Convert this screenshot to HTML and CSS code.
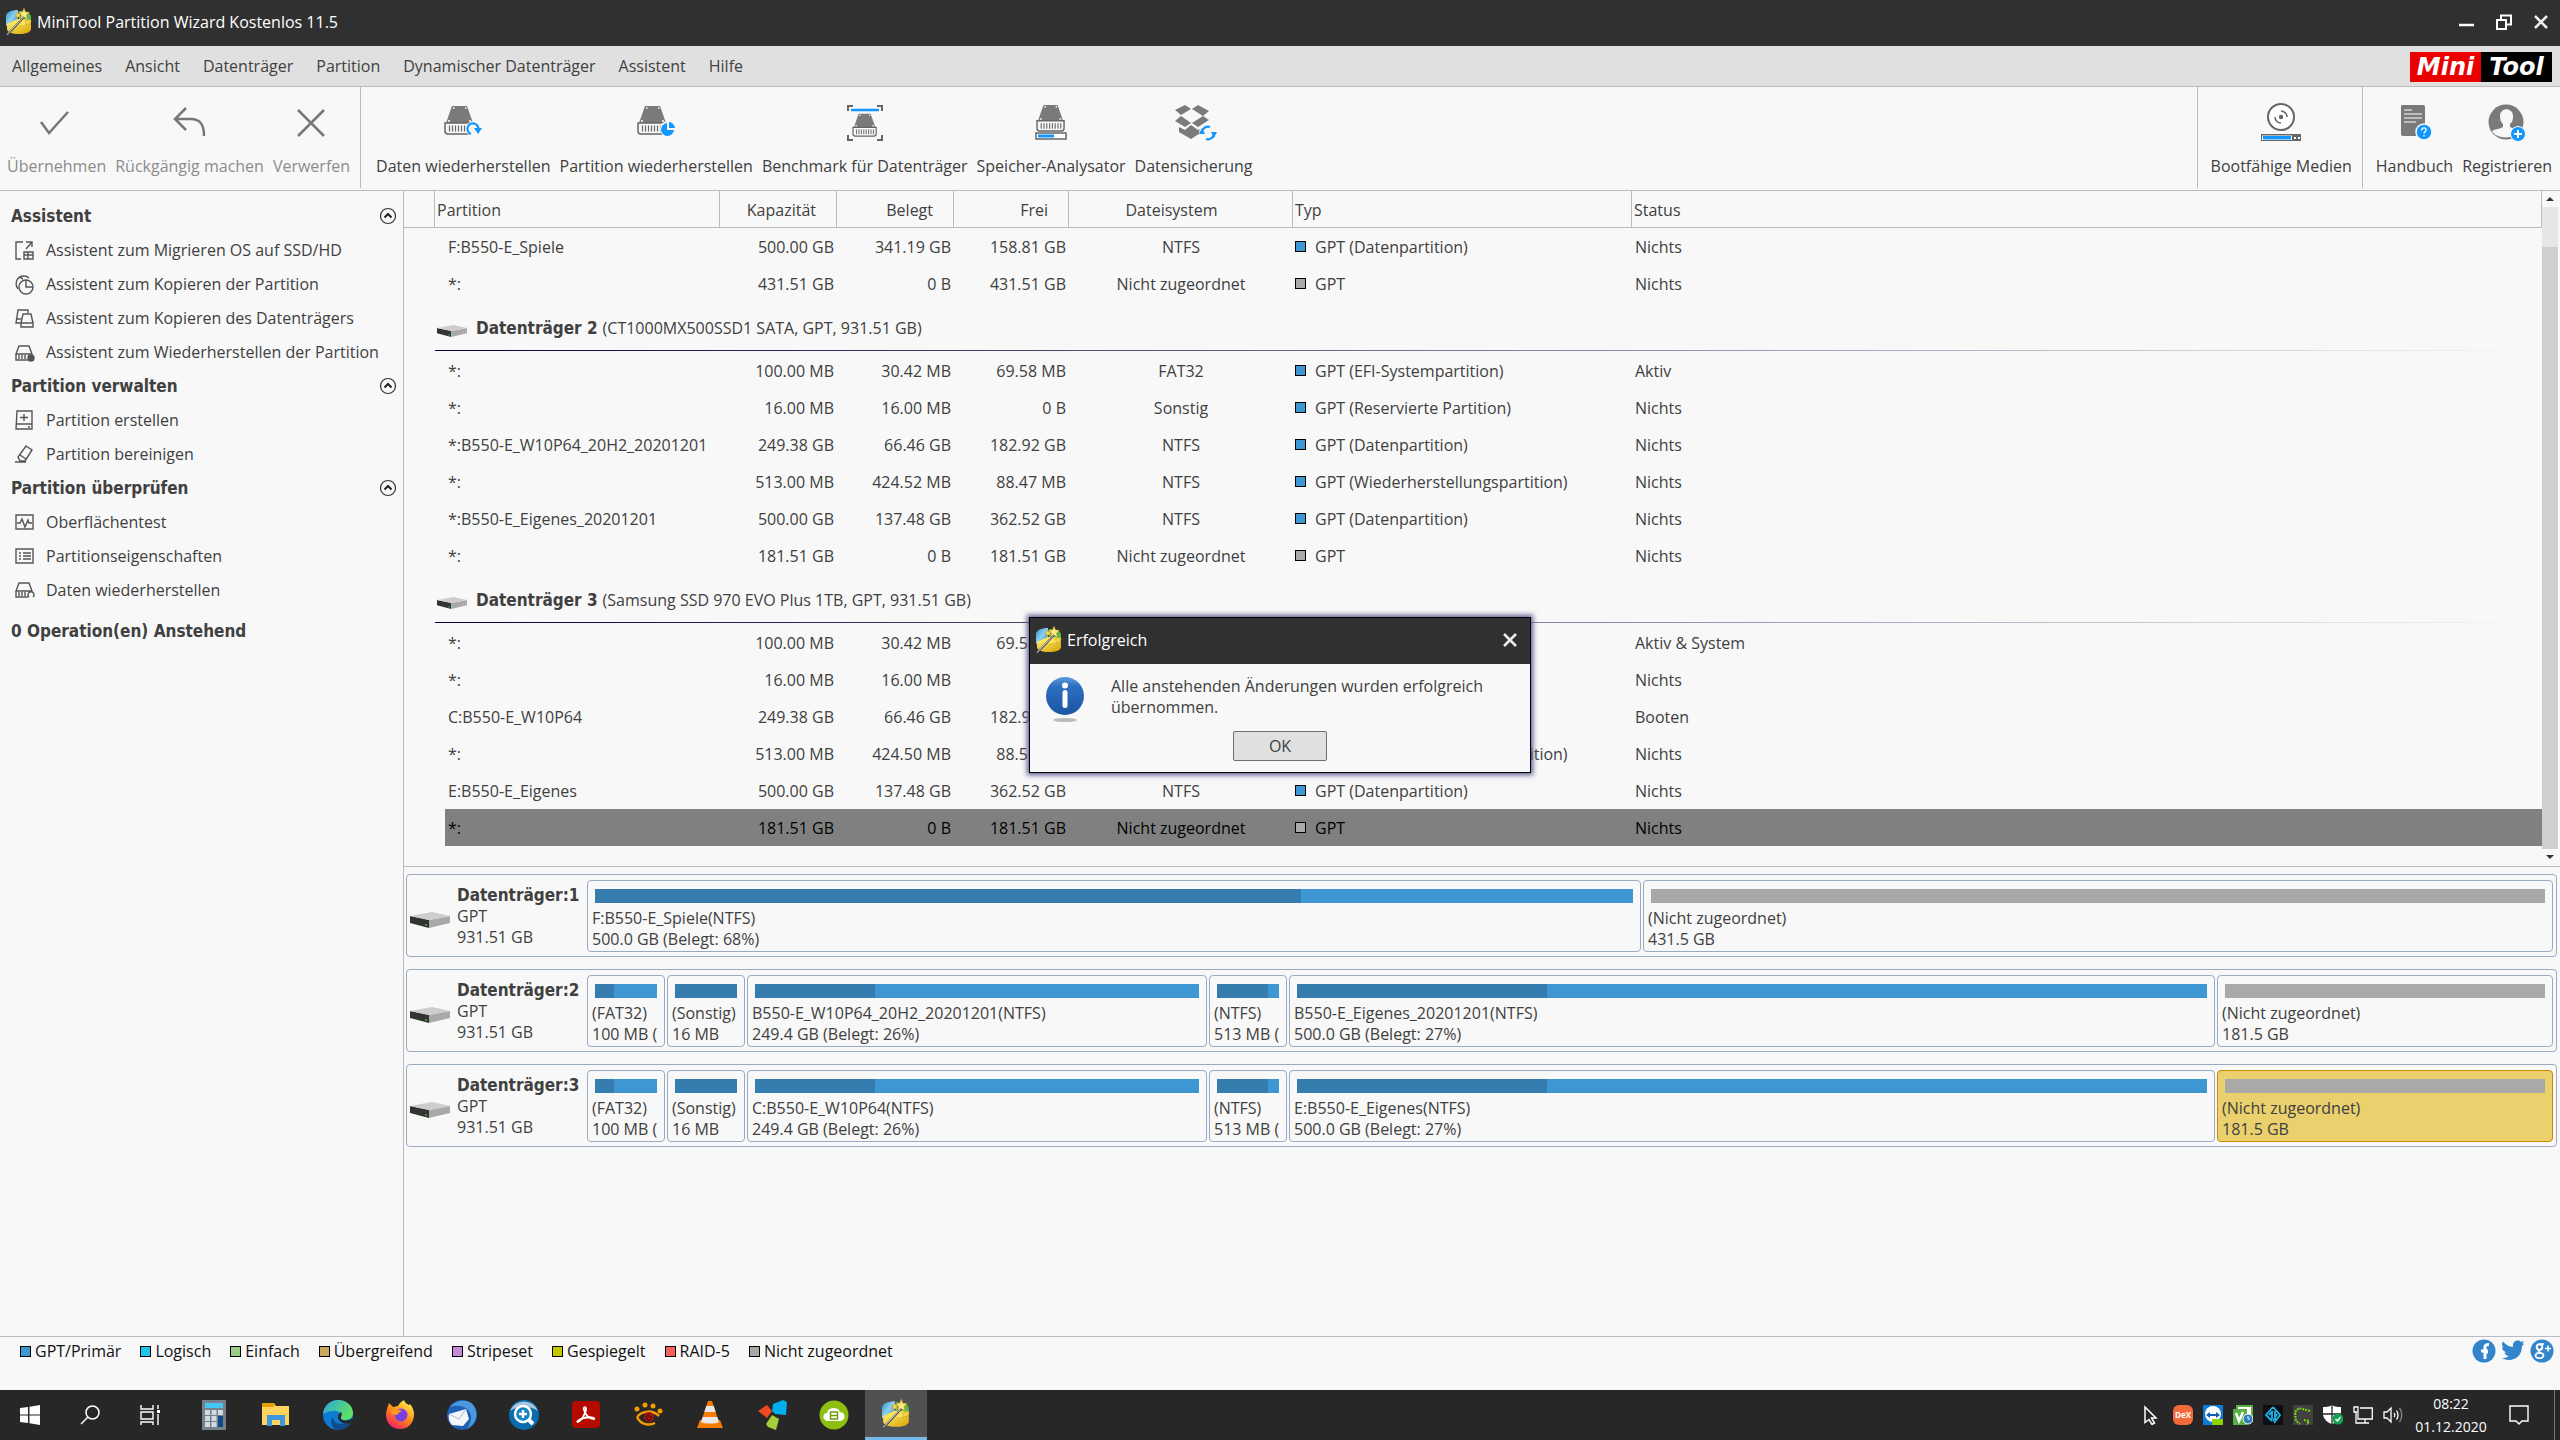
FILE: index.html
```html
<!DOCTYPE html>
<html lang="de">

  <head>
    <meta charset="UTF-8">
    <meta name="viewport" content="width=device-width, initial-scale=1.0">
    <title>MiniTool Partition Wizard Kostenlos 11.5</title>
    <link rel="stylesheet" href="styles.css">
  </head>

  <body>
    <!-- shared icons -->
    <svg class="defs" width="0" height="0" aria-hidden="true">
      <defs>
        <linearGradient id="gold" x1="0" y1="0" x2="1" y2="1">
          <stop offset="0" stop-color="#fff27a" />
          <stop offset="1" stop-color="#d9a400" />
        </linearGradient>
        <linearGradient id="sky" x1="0" y1="0" x2="1" y2="1">
          <stop offset="0" stop-color="#2a8fd0" />
          <stop offset="0.5" stop-color="#8fd0f0" />
          <stop offset="1" stop-color="#1f78b8" />
        </linearGradient>
      </defs>
      <symbol id="wizard" viewBox="0 0 28 28">
        <path d="M1 8c0-4 6-6 12-6v11L1 18z" fill="url(#sky)" />
        <path d="M14 3c7 0 12 2 12 6v5l-12-1z" fill="#58b947" />
        <path d="M2 16l11-5 13 1v9c0 3-5 5-12 5S2 24 2 21z" fill="url(#gold)" />
        <path d="M2 16l11-5 13 1c0 4-5 5-11 5S3 18 2 16z" fill="#fbe45a" />
        <path d="M19 0l1.500 4 4 .3-3 2.700 1 4.500-3.500-2.500-3.500 2.500 1-4.500-3-2.700 4-.3z" fill="#ffe680" stroke="#b98a10" stroke-width=".5" />
        <path d="M13 4l1 2 2 .3-1.500 1.400.5 2.300-2-1.200-2 1.200.5-2.300L10 6.300l2-.3zM23 11l1 2 2.500.3-1.800 1.500.6 2.400-2.300-1.300-2.200 1.300.5-2.400-1.800-1.500 2.400-.3z" fill="#f6d84b" stroke="#b98a10" stroke-width=".4" />
        <path d="M2 27L19 9" stroke="#555" stroke-width="2" />
        <path d="M2 26.500L19 8.500" stroke="#ddd" stroke-width=".9" />
      </symbol>
      <symbol id="drive" viewBox="0 0 40 16">
        <path d="M0 4l19 4v8L0 11z" fill="#333" />
        <path d="M19 8l21-4v7l-21 5z" fill="#a9a9a9" />
        <path d="M0 4l22-4 18 4-21 4z" fill="#cdcdcd" />
        <path d="M15 12h2v2h-2z" fill="#2aa52a" />
      </symbol>
      <symbol id="hdd" viewBox="0 0 32 30">
        <path d="M8 1h15l6 17H2z" fill="#7a7a7a" />
        <path d="M9 3h1.500M21 3h1.500M4 16h2M25 16h2" stroke="#fff" stroke-width="1.500" />
        <path d="M1 18h29v8a3 3 0 0 1-3 3H4a3 3 0 0 1-3-3z" fill="#f8f8f8" stroke="#666" stroke-width="1.500" />
        <path d="M5.500 20.500v6M8.500 20.500v6M11.500 20.500v6M14.500 20.500v6M17.500 20.500v6M20.500 20.500v6M23.500 20.500v6M26.500 20.500v6" stroke="#666" stroke-width="1.200" />
      </symbol>
      <symbol id="fold" viewBox="0 0 18 18">
        <circle cx="9" cy="9" r="7.500" fill="none" stroke="#333" stroke-width="1.200" />
        <path d="M5.500 10.500L9 7l3.500 3.500" fill="none" stroke="#222" stroke-width="2" />
      </symbol>
      <symbol id="close" viewBox="0 0 16 16">
        <path d="M2 2l12 12M14 2L2 14" stroke="#eee" stroke-width="2.500" />
      </symbol>
    </svg>

    <div class="app">
      <header class="titlebar">
        <svg class="logo"><use href="#wizard" /></svg>
        <h1>MiniTool Partition Wizard Kostenlos 11.5</h1>
        <button type="button" aria-label="Minimieren"><svg width="16" height="16"><path d="M0 11h15" stroke="#fff" stroke-width="2.500" /></svg></button>
        <button type="button" aria-label="Wiederherstellen"><svg width="16" height="16" fill="none" stroke="#fff" stroke-width="2"><path d="M1 6h9v9H1zM5 5V1.500h10v9h-4" /></svg></button>
        <button type="button" aria-label="Schließen"><svg width="16" height="16"><use href="#close" /></svg></button>
      </header>

      <nav class="menubar">
        <a href="#">Allgemeines</a>
        <a href="#">Ansicht</a>
        <a href="#">Datenträger</a>
        <a href="#">Partition</a>
        <a href="#">Dynamischer Datenträger</a>
        <a href="#">Assistent</a>
        <a href="#">Hilfe</a>
        <div class="brand"><span>Mini</span><span>Tool</span></div>
      </nav>

      <div class="toolbar">
        <div class="tools">
          <button type="button" disabled>
            <svg width="40" height="42" fill="none" stroke="#777" stroke-width="2.500"><path d="M4 21l8 11L31 11" /></svg>
            Übernehmen
          </button>
          <button type="button" disabled>
            <svg width="40" height="42" fill="none" stroke="#777" stroke-width="2.500"><path d="M16 7L5 18l11 11M5 18h16c9 0 13 5 13 17" /></svg>
            Rückgängig machen
          </button>
          <button type="button" disabled>
            <svg width="40" height="42" fill="none" stroke="#777" stroke-width="2.500"><path d="M7 9l26 26M33 9L7 35" /></svg>
            Verwerfen
          </button>
        </div>
        <div class="tools grow">
          <button type="button">
            <svg width="40" height="42"><use href="#hdd" x="1" y="4" width="32" height="30" /><circle cx="31" cy="28" r="8" fill="#f8f8f8" /><path d="M28 33a5.500 5.500 0 1 1 7-3" fill="none" stroke="#1296ff" stroke-width="2.200" /><path d="M31 27h8l-4 6z" fill="#1296ff" /></svg>
            Daten wiederherstellen
          </button>
          <button type="button">
            <svg width="40" height="42"><use href="#hdd" x="1" y="4" width="32" height="30" /><circle cx="32" cy="28" r="8" fill="#f8f8f8" /><path d="M31 22a6.500 6.500 0 1 0 7 7h-7z" fill="#1296ff" /><path d="M33 21a6.500 6.500 0 0 1 6 6h-6z" fill="#1296ff" /></svg>
            Partition wiederherstellen
          </button>
          <button type="button">
            <svg width="40" height="42"><path d="M3 10V5h5M32 5h5v5M3 34v5h5M37 34v5h-5" fill="none" stroke="#666" stroke-width="2" /><path d="M6 9h28" stroke="#1296ff" stroke-width="2.500" /><use href="#hdd" x="6" y="12" width="28" height="24" /></svg>
            Benchmark für Datenträger
          </button>
          <button type="button">
            <svg width="40" height="42"><use href="#hdd" x="4" y="3" width="32" height="28" /><path d="M5 32h30v6H5z" fill="#fff" stroke="#666" stroke-width="1.500" /><path d="M7 35h16" stroke="#1296ff" stroke-width="3" /></svg>
            Speicher-Analysator
          </button>
          <button type="button">
            <svg width="46" height="42"><path d="M14 4l6 4-10 6-6-5zM27 4l11 6-6 5-11-7zM4 20l6-5 10 7-6 4zM32 15l6 4-11 7-6-4zM8 26l6 3 6-5 7 5 4-2v4l-11 7-12-7z" fill="#7a7a7a" /><circle cx="37" cy="32" r="9" fill="#f8f8f8" /><path d="M31 32a6 6 0 0 1 8-6M43 32a6 6 0 0 1-8 6" fill="none" stroke="#1296ff" stroke-width="2.200" /><path d="M28 33h6l-3-6zM40 31h6l-3 6z" fill="#1296ff" /></svg>
            Datensicherung
          </button>
        </div>
        <div class="tools right">
          <button type="button">
            <svg width="44" height="42"><circle cx="22" cy="16" r="13" fill="#fff" stroke="#666" stroke-width="2" /><path d="M22 10a6 6 0 0 1 6 6M22 22a6 6 0 0 1-6-6" fill="none" stroke="#666" stroke-width="1.500" /><circle cx="22" cy="16" r="2.200" fill="#666" /><path d="M2 33h40v7H2z" fill="#666" /><path d="M3 34.500h30v4.500H3z" fill="#fff" /><path d="M4 35h28v3.500H4z" fill="#1296ff" /><path d="M35 36h2v2h-2zM39 36h2v2h-2z" fill="#fff" /></svg>
            Bootfähige Medien
          </button>
        </div>
        <div class="tools right">
          <button type="button">
            <svg width="40" height="42"><path d="M7 4h21a2 2 0 0 1 2 2v29H8a2 2 0 0 1-2-2V5z" fill="#7a7a7a" /><path d="M9 9h8M9 13h18M9 17h18M9 21h12" stroke="#fff" stroke-width="1.200" /><circle cx="29" cy="31" r="8" fill="#1296ff" stroke="#f8f8f8" stroke-width="1.500" /><path d="M26.500 29.500c0-4 5.500-3 4.500 0-.3 1-2 1.200-2 3M29 34v1.500" fill="none" stroke="#fff" stroke-width="1.300" /></svg>
            Handbuch
          </button>
          <button type="button">
            <svg width="40" height="42"><circle cx="19" cy="21" r="17.500" fill="#7a7a7a" /><path d="M13 15c0-9 13-9 13 0 0 5-1 6-3 8v3c4 2 7 2 10 4-5 8-23 9-28 0 3-2 8-2 11-4v-3c-2-2-3-4-3-8z" fill="#f8f8f8" /><circle cx="31" cy="33" r="7.500" fill="#1296ff" stroke="#f8f8f8" /><path d="M31 29v8M27 33h8" stroke="#fff" stroke-width="2" /></svg>
            Registrieren
          </button>
        </div>
      </div>

      <div class="content">
        <aside class="sidebar">
          <h2>Assistent <svg><use href="#fold" /></svg></h2>
          <a href="#"><svg viewBox="0 0 21 21"><path d="M9 2H2v17h5M12 2h6v5M18 2l-6 7M10 12h9v7h-9zM10 15h9M14 12v7" /></svg>Assistent zum Migrieren OS auf SSD/HD</a>
          <a href="#"><svg viewBox="0 0 21 21"><circle cx="12" cy="13" r="7" /><path d="M12 6v7h7M4 15C0 9 3 2 10 2c3 0 4 1 5 2M9 5c-3-1-3-3-3-3" /></svg>Assistent zum Kopieren der Partition</a>
          <a href="#"><svg viewBox="0 0 21 21"><path d="M14 5V2H4L2 15h5M3 11h4M9 6h8l2 9v4H7v-4zM7 15h12" /></svg>Assistent zum Kopieren des Datenträgers</a>
          <a href="#"><svg viewBox="0 0 21 21"><path d="M5 4h10l3 8H2zM2 12v6h14M5 13v4M8 13v4M11 13v4" /><circle cx="17" cy="16" r="3" fill="#555" /></svg>Assistent zum Wiederherstellen der Partition</a>
          <h2>Partition verwalten <svg><use href="#fold" /></svg></h2>
          <a href="#"><svg viewBox="0 0 21 21"><path d="M3 1h15v18H2zM2 14h16M10 4v7M6 7.500h8M14 17h2" /></svg>Partition erstellen</a>
          <a href="#"><svg viewBox="0 0 21 21"><path d="M12 2l6 4-7 11H6l-2-4zM6 11l6 4M1 18h11" /></svg>Partition bereinigen</a>
          <h2>Partition überprüfen <svg><use href="#fold" /></svg></h2>
          <a href="#"><svg viewBox="0 0 21 21"><path d="M2 3h17v14H2zM3 11h3l2-4 3 8 3-7 1 3h3" /></svg>Oberflächentest</a>
          <a href="#"><svg viewBox="0 0 21 21"><path d="M2 3h17v14H2zM5 7h2M9 7h8M5 10h2M9 10h8M5 13h2M9 13h8" /></svg>Partitionseigenschaften</a>
          <a href="#"><svg viewBox="0 0 21 21"><path d="M5 3h10l3 8H2zM2 11v6h12M5 12v4M8 12v4M11 12v4M15 17a3 3 0 1 1 4 0" /></svg>Daten wiederherstellen</a>
          <h2 class="pending">0 Operation(en) Anstehend</h2>
        </aside>

        <main>
          <div class="list">
            <table>
              <colgroup>
                <col class="c-mark"><col class="c-name"><col class="c-size"><col class="c-size"><col class="c-free"><col class="c-fs"><col class="c-type"><col>
              </colgroup>
              <thead>
                <tr><th></th><th>Partition</th><th class="num">Kapazität</th><th class="num">Belegt</th><th class="num">Frei</th><th class="fs">Dateisystem</th><th>Typ</th><th>Status</th></tr>
              </thead>
              <tbody>
                <tr><td></td><td>F:B550-E_Spiele</td><td>500.00 GB</td><td>341.19 GB</td><td>158.81 GB</td><td>NTFS</td><td><i class="sw primary"></i>GPT (Datenpartition)</td><td>Nichts</td></tr>
                <tr><td></td><td>*:</td><td>431.51 GB</td><td>0 B</td><td>431.51 GB</td><td>Nicht zugeordnet</td><td><i class="sw free"></i>GPT</td><td>Nichts</td></tr>
                <tr class="disk"><td></td><td colspan="7"><div><svg><use href="#drive" /></svg><b>Datenträger 2</b> (CT1000MX500SSD1 SATA, GPT, 931.51 GB)</div></td></tr>
                <tr><td></td><td>*:</td><td>100.00 MB</td><td>30.42 MB</td><td>69.58 MB</td><td>FAT32</td><td><i class="sw primary"></i>GPT (EFI-Systempartition)</td><td>Aktiv</td></tr>
                <tr><td></td><td>*:</td><td>16.00 MB</td><td>16.00 MB</td><td>0 B</td><td>Sonstig</td><td><i class="sw primary"></i>GPT (Reservierte Partition)</td><td>Nichts</td></tr>
                <tr><td></td><td>*:B550-E_W10P64_20H2_20201201</td><td>249.38 GB</td><td>66.46 GB</td><td>182.92 GB</td><td>NTFS</td><td><i class="sw primary"></i>GPT (Datenpartition)</td><td>Nichts</td></tr>
                <tr><td></td><td>*:</td><td>513.00 MB</td><td>424.52 MB</td><td>88.47 MB</td><td>NTFS</td><td><i class="sw primary"></i>GPT (Wiederherstellungspartition)</td><td>Nichts</td></tr>
                <tr><td></td><td>*:B550-E_Eigenes_20201201</td><td>500.00 GB</td><td>137.48 GB</td><td>362.52 GB</td><td>NTFS</td><td><i class="sw primary"></i>GPT (Datenpartition)</td><td>Nichts</td></tr>
                <tr><td></td><td>*:</td><td>181.51 GB</td><td>0 B</td><td>181.51 GB</td><td>Nicht zugeordnet</td><td><i class="sw free"></i>GPT</td><td>Nichts</td></tr>
                <tr class="disk"><td></td><td colspan="7"><div><svg><use href="#drive" /></svg><b>Datenträger 3</b> (Samsung SSD 970 EVO Plus 1TB, GPT, 931.51 GB)</div></td></tr>
                <tr><td></td><td>*:</td><td>100.00 MB</td><td>30.42 MB</td><td>69.58 MB</td><td>FAT32</td><td><i class="sw primary"></i>GPT (EFI-Systempartition)</td><td>Aktiv &amp; System</td></tr>
                <tr><td></td><td>*:</td><td>16.00 MB</td><td>16.00 MB</td><td>0 B</td><td>Sonstig</td><td><i class="sw primary"></i>GPT (Reservierte Partition)</td><td>Nichts</td></tr>
                <tr><td></td><td>C:B550-E_W10P64</td><td>249.38 GB</td><td>66.46 GB</td><td>182.92 GB</td><td>NTFS</td><td><i class="sw primary"></i>GPT (Datenpartition)</td><td>Booten</td></tr>
                <tr><td></td><td>*:</td><td>513.00 MB</td><td>424.50 MB</td><td>88.50 MB</td><td>NTFS</td><td><i class="sw primary"></i>GPT (Wiederherstellungspartition)</td><td>Nichts</td></tr>
                <tr><td></td><td>E:B550-E_Eigenes</td><td>500.00 GB</td><td>137.48 GB</td><td>362.52 GB</td><td>NTFS</td><td><i class="sw primary"></i>GPT (Datenpartition)</td><td>Nichts</td></tr>
                <tr class="selected"><td></td><td>*:</td><td>181.51 GB</td><td>0 B</td><td>181.51 GB</td><td>Nicht zugeordnet</td><td><i class="sw free"></i>GPT</td><td>Nichts</td></tr>
              </tbody>
            </table>
            <div class="scrollbar">
              <svg width="8" height="6"><path d="M0 5l4-4 4 4z" fill="#333" /></svg>
              <div class="track"><div class="thumb"></div></div>
              <svg width="8" height="6"><path d="M0 1l4 4 4-4z" fill="#333" /></svg>
            </div>
          </div>

          <div class="maps">
            <section class="map">
              <svg><use href="#drive" /></svg>
              <div class="info"><b>Datenträger:1</b><br>GPT<br>931.51 GB</div>
              <div class="parts two">
                <div class="part"><div class="bar"><div style="width: 68%"></div></div><p>F:B550-E_Spiele(NTFS)</p><p>500.0 GB (Belegt: 68%)</p></div>
                <div class="part"><div class="bar none"></div><p>(Nicht zugeordnet)</p><p>431.5 GB</p></div>
              </div>
            </section>
            <section class="map">
              <svg><use href="#drive" /></svg>
              <div class="info"><b>Datenträger:2</b><br>GPT<br>931.51 GB</div>
              <div class="parts">
                <div class="part"><div class="bar"><div style="width: 31%"></div></div><p>(FAT32)</p><p>100 MB (</p></div>
                <div class="part"><div class="bar"><div style="width: 100%"></div></div><p>(Sonstig)</p><p>16 MB</p></div>
                <div class="part"><div class="bar"><div style="width: 27%"></div></div><p>B550-E_W10P64_20H2_20201201(NTFS)</p><p>249.4 GB (Belegt: 26%)</p></div>
                <div class="part"><div class="bar"><div style="width: 82%"></div></div><p>(NTFS)</p><p>513 MB (</p></div>
                <div class="part"><div class="bar"><div style="width: 27.5%"></div></div><p>B550-E_Eigenes_20201201(NTFS)</p><p>500.0 GB (Belegt: 27%)</p></div>
                <div class="part"><div class="bar none"></div><p>(Nicht zugeordnet)</p><p>181.5 GB</p></div>
              </div>
            </section>
            <section class="map">
              <svg><use href="#drive" /></svg>
              <div class="info"><b>Datenträger:3</b><br>GPT<br>931.51 GB</div>
              <div class="parts">
                <div class="part"><div class="bar"><div style="width: 31%"></div></div><p>(FAT32)</p><p>100 MB (</p></div>
                <div class="part"><div class="bar"><div style="width: 100%"></div></div><p>(Sonstig)</p><p>16 MB</p></div>
                <div class="part"><div class="bar"><div style="width: 27%"></div></div><p>C:B550-E_W10P64(NTFS)</p><p>249.4 GB (Belegt: 26%)</p></div>
                <div class="part"><div class="bar"><div style="width: 82%"></div></div><p>(NTFS)</p><p>513 MB (</p></div>
                <div class="part"><div class="bar"><div style="width: 27.5%"></div></div><p>E:B550-E_Eigenes(NTFS)</p><p>500.0 GB (Belegt: 27%)</p></div>
                <div class="part active"><div class="bar none"></div><p>(Nicht zugeordnet)</p><p>181.5 GB</p></div>
              </div>
            </section>
          </div>
        </main>
      </div>

      <footer class="legend">
        <span><i class="sw primary"></i>GPT/Primär</span>
        <span><i class="sw logical"></i>Logisch</span>
        <span><i class="sw simple"></i>Einfach</span>
        <span><i class="sw spanned"></i>Übergreifend</span>
        <span><i class="sw striped"></i>Stripeset</span>
        <span><i class="sw mirrored"></i>Gespiegelt</span>
        <span><i class="sw raid"></i>RAID-5</span>
        <span><i class="sw free"></i>Nicht zugeordnet</span>
        <div class="social">
          <a href="#" aria-label="Facebook"><svg width="24" height="24"><circle cx="12" cy="12" r="11.500" fill="#3285cb" /><path d="M13 20v-7h3M9 12h7M13 13V8c0-2 1-2.500 4-2.500" fill="none" stroke="#fff" stroke-width="3" /></svg></a>
          <a href="#" aria-label="Twitter"><svg width="24" height="24"><path d="M1 19c3 0 5-.5 7-2-3 0-4-2-4.500-3.500h2C2 12 1 10 1 8l2 1C0 6 1 4 2 2.500 5 6 8 7.500 12 8c-1-6 5-8 8-5l3-1-1.500 3 2-.5L21 7c0 9-6 14-13 14-3 0-5-1-7-2z" fill="#3285cb" /></svg></a>
          <a href="#" aria-label="Google Plus"><svg width="24" height="24"><circle cx="12" cy="12" r="11.500" fill="#3285cb" /><g fill="none" stroke="#fff"><circle cx="9.500" cy="8" r="2.800" stroke-width="2" /><ellipse cx="9.500" cy="16.500" rx="4" ry="2.700" stroke-width="1.800" /><path d="M9 11c-2 1 1 2 2 3M10 5h4M18 6.500v6M15 9.500h6" stroke-width="1.500" /></g></svg></a>
        </div>
      </footer>

      <div class="overlay">
        <dialog open aria-labelledby="dialog-title">
          <div class="dialog-head">
            <svg class="logo"><use href="#wizard" /></svg>
            <h2 id="dialog-title">Erfolgreich</h2>
            <button type="button" aria-label="Schließen"><svg width="16" height="16"><use href="#close" /></svg></button>
          </div>
          <div class="dialog-body">
            <svg width="40" height="50">
              <defs><linearGradient id="ball" x1="0" y1="0" x2="0" y2="1"><stop offset="0" stop-color="#5b9bdc" /><stop offset=".25" stop-color="#2c6fc0" /><stop offset="1" stop-color="#1c55a0" /></linearGradient></defs>
              <ellipse cx="20" cy="44" rx="12" ry="2" fill="#bbb" />
              <circle cx="20" cy="20" r="19" fill="url(#ball)" />
              <circle cx="20" cy="9.500" r="3" fill="#fff" />
              <rect x="17.500" y="14" width="5" height="18" rx="2.500" fill="#fff" />
            </svg>
            <p>Alle anstehenden Änderungen wurden erfolgreich übernommen.</p>
          </div>
          <button type="button" class="ok">OK</button>
        </dialog>
      </div>
    </div>

    <div class="taskbar">
      <div class="system">
        <button type="button" aria-label="Start"><svg width="20" height="20" fill="#fff"><path d="M0 3l8-1v7.500H0zM9.500 1.800L20 0v9.500H9.500zM0 10.500h8V18l-8-1zM9.500 10.500H20V20l-10.500-1.800z" /></svg></button>
        <button type="button" aria-label="Suche"><svg width="20" height="20" fill="none" stroke="#fff" stroke-width="1.500"><circle cx="12.500" cy="7.500" r="6.500" /><path d="M8 12l-7 7" /></svg></button>
        <button type="button" aria-label="Taskansicht"><svg width="20" height="20" fill="none" stroke="#fff" stroke-width="1.400"><path d="M1 0v4h12V0M1 7h12v7H1zM1 20v-3h12v3M18 0v4M18 9v11" /><path d="M17 5h3v3h-3z" fill="#fff" stroke="none" /></svg></button>
      </div>
      <button type="button" aria-label="Rechner"><svg width="30" height="30"><path d="M3 0h24v30H3z" fill="#76818d" /><path d="M6 3h18v5H6z" fill="#45c7f4" /><path d="M6 10h5v5H6zM12.500 10h5v5h-5zM19 10h5v5h-5zM6 16h5v5H6zM12.500 16h5v5h-5zM6 22h5v5H6zM12.500 22h5v5h-5z" fill="#d3dbe2" /><path d="M19 16h5v11h-5z" fill="#0f4a8a" /></svg></button>
      <button type="button" aria-label="Explorer"><svg width="30" height="30"><path d="M1 3h12l2 3h13v19H1z" fill="#ffd45e" /><path d="M1 3h11l2 2-2 2H1z" fill="#e3a100" /><path d="M6 26V15h18v11h-5v-6h-8v6z" fill="#3d97dc" /></svg></button>
      <button type="button" aria-label="Edge">
        <svg width="30" height="30">
          <defs><linearGradient id="edge" x1="0" y1="0" x2="1" y2=".4"><stop offset="0" stop-color="#2aa6e0" /><stop offset="1" stop-color="#5fe06a" /></linearGradient></defs>
          <circle cx="15" cy="15" r="15" fill="#0b7bd4" />
          <path d="M0 14C1 5 8 0 15 0c9 0 15 6 15 13 0 5-4 7-8 7-3 0-5-1-4-3 1-6-7-9-18-3z" fill="url(#edge)" />
          <path d="M10 17c0 6 6 9 18 5-3 5-8 8-13 8-6-1-9-8-5-13z" fill="#114a8b" />
          <path d="M18 12c2 3-1 5 0 7 2 2 6 3 12-1l-2 5c-8 2-13-2-13-6 0-2 1-4 3-5z" fill="#272727" />
        </svg>
      </button>
      <button type="button" aria-label="Firefox">
        <svg width="30" height="30">
          <defs><linearGradient id="fox" x1=".8" y1="0" x2=".2" y2="1"><stop offset="0" stop-color="#fff44f" /><stop offset=".5" stop-color="#ff8a16" /><stop offset="1" stop-color="#f5156c" /></linearGradient></defs>
          <path d="M3 6l1-3 4 4 5-1c2-4 5-5 6-6 1 3 3 4 5 5l1-1c3 4 4 7 4 10 0 9-6 15-14 15S1 23 1 15c0-4 1-6 2-9z" fill="url(#fox)" />
          <circle cx="16" cy="15" r="6.500" fill="#7a3fe0" />
          <path d="M5 12c4-3 8-3 12-1-2 1-4 2-5 4-3 0-5-1-7-3z" fill="#ff9a20" />
        </svg>
      </button>
      <button type="button" aria-label="Thunderbird"><svg width="30" height="30"><circle cx="15" cy="15" r="15" fill="#1f5fb4" /><path d="M3 7C8 0 22-2 27 6c5 8 2 18-7 23 5-8 6-15 0-20C15 5 8 5 3 7z" fill="#4b97e0" /><path d="M2 14l17-5 3 10-6 7-11-1c-3-3-4-7-3-11z" fill="#f2f5fa" /><path d="M2 14l10 5 7-10" fill="none" stroke="#a9bdd6" /></svg></button>
      <button type="button" aria-label="Suchprogramm"><svg width="30" height="30"><circle cx="15" cy="15" r="15" fill="#0a6cae" /><path d="M1 11a15 15 0 0 1 28 0C20 5 10 5 1 11z" fill="#a8c4de" /><circle cx="14" cy="14" r="8" fill="#1184c4" stroke="#fff" stroke-width="2.500" /><path d="M20 20l4 4" stroke="#fff" stroke-width="4" /><path d="M14 10v8M10 14h8" stroke="#fff" stroke-width="2.500" /></svg></button>
      <button type="button" aria-label="Acrobat"><svg width="30" height="30"><rect x="1" y="1" width="28" height="27" rx="4" fill="#b30b00" /><path d="M7 22c3-1 8-9 8-13 0-3-3-2-2 1 2 6 6 9 10 9 2-2-9-3-15 1-2 1-2 2-1 2z" fill="none" stroke="#fff" stroke-width="1.800" /></svg></button>
      <button type="button" aria-label="XnView"><svg width="30" height="30"><path d="M4 17c6-7 16-7 22-1-3-3-6-4-9-4M4 17c4 8 12 9 18 6" fill="none" stroke="#f59b00" stroke-width="2.500" /><circle cx="16" cy="17" r="5" fill="#a31515" /><path d="M16 17c1-3 4 1 1 3s-5-4-1-6" fill="none" stroke="#300" /><circle cx="4" cy="9" r="2.500" fill="#f59b00" /><circle cx="12" cy="5" r="2.500" fill="#f59b00" /><circle cx="20" cy="6" r="2.500" fill="#f59b00" /><circle cx="27" cy="11" r="2.500" fill="#f59b00" /></svg></button>
      <button type="button" aria-label="VLC"><svg width="30" height="30"><path d="M5 20h20l3 8H2z" fill="#f57c00" /><path d="M13 1h4l7 21c-3 3-15 3-18 0z" fill="#f57c00" /><path d="M11.300 6h7.400l2 6H9.300zM7.700 17h14.600l1.700 5c-3 2-15 2-18 0z" fill="#e8e8e8" /></svg></button>
      <button type="button" aria-label="Propeller"><svg width="30" height="30"><path d="M1 11l9-6 5 6-5 7z" fill="#ef4a23" /><path d="M16 4l10-4 4 2-1 13-11-1-3-3z" fill="#00aef0" /><path d="M15 15l7 4-3 11-8-3-2-3z" fill="#a5cf3a" /></svg></button>
      <button type="button" aria-label="Cloud"><svg width="30" height="30"><circle cx="15" cy="15" r="14.500" fill="#8cbf12" /><path d="M9 21c-6 0-6-8-1-8 1-6 11-7 13-1 6 0 6 9 0 9z" fill="#fff" /><path d="M11.500 12h7v7h-7zM11.500 15.500h7" fill="none" stroke="#6f9e0a" stroke-width="1.500" /></svg></button>
      <button type="button" class="running" aria-label="MiniTool Partition Wizard"><svg width="30" height="30"><use href="#wizard" /></svg></button>

      <div class="tray">
        <svg class="pointer" width="20" height="20"><path d="M5 2l11 11h-4.500l3 5-2.500 1.500-3-5-4 3z" fill="#272727" stroke="#fff" stroke-width="1.500" /></svg>
        <svg width="20" height="20"><rect width="20" height="20" rx="6" fill="#f2693c" /><text x="10" y="13" text-anchor="middle" class="dex">DeX</text></svg>
        <svg width="20" height="20"><path d="M0 0h20v20H0z" fill="#0e7ad8" /><circle cx="10" cy="9" r="8" fill="#fff" /><path d="M3 10l4-3v2h6V7l4 3-4 3v-2H7v2z" fill="#0e5fb0" /><rect x="9" y="14" width="11" height="6" rx="1" fill="#8fd400" /></svg>
        <svg width="20" height="20"><path d="M4 1h15v14H4z" fill="#fff" stroke="#58b043" stroke-width="2" /><path d="M0 4h14v16H0z" fill="#58b043" /><path d="M3 8l3 8 4-9" fill="none" stroke="#fff" stroke-width="2.500" /><circle cx="15" cy="14" r="5" fill="#2f7db8" stroke="#fff" /><path d="M15 11v3h2" fill="none" stroke="#fff" /></svg>
        <svg width="20" height="20"><path d="M0 0h20v20H0z" fill="#0b0f14" /><path d="M10 2L3 10l6 6M9 6v8M10 2l7 8-6 8M12 6v9M6 10l4-4M14 9l-4 7" fill="none" stroke="#20b4e8" stroke-width="1.800" /></svg>
        <svg width="20" height="20"><path d="M0 0h20v20H0z" fill="#414141" /><path d="M17 6L6 3 2 7l1 9 4 3M11 15l5 1-2 4" fill="none" stroke="#76d813" stroke-width="2" stroke-dasharray="2 1" /></svg>
        <svg width="20" height="20"><path d="M9 0c3 2 6 2 9 2v7c0 5-5 9-9 10-4-1-9-5-9-10V2c3 0 6 0 9-2z" fill="#fff" /><path d="M9 0v19M0 9h18" stroke="#272727" stroke-width="1.300" /><circle cx="15" cy="14" r="5.500" fill="#12a150" /><path d="M12.500 14l2 2 3-4" fill="none" stroke="#fff" stroke-width="1.400" /></svg>
        <svg width="20" height="20" fill="none" stroke="#fff" stroke-width="1.300"><path d="M7 3h12.300v11H5V8M12 14v4M8 18h8M1 2h4v5H1zM3 7v11h5" /></svg>
        <svg width="20" height="20" fill="none" stroke="#fff" stroke-width="1.300"><path d="M1 7h3l4-4v14l-4-4H1zM11 8c1 1 1 3 0 4M13.500 5.500c2 3 2 6 0 9" /><path d="M16.500 3c3 4 3 10 0 14" stroke="#888" /></svg>
        <time datetime="2020-12-01T08:22">08:22<br>01.12.2020</time>
        <svg class="notes" width="20" height="20" fill="none" stroke="#fff" stroke-width="1.400"><path d="M1 1h18v15h-6l-3 3-3-3H1z" /></svg>
      </div>
    </div>
  </body>

</html>
```
FILE: styles.css
```css
* {
  box-sizing: border-box;
}

body {
  margin: 0;
  min-height: 100vh;
  display: flex;
  flex-direction: column;
  background: #f8f8f8;
  color: #404040;
  font-family: "Open Sans", "Noto Sans", sans-serif;
  font-size: 16px;
  line-height: 21px;
}

h1, h2, p {
  margin: 0;
  font-size: 16px;
  font-weight: 400;
}

b, .sidebar h2 {
  font-family: "DejaVu Sans Condensed", sans-serif;
  font-size: 17px;
  font-weight: 700;
}

button {
  margin: 0;
  padding: 0;
  border: 0;
  background: none;
  color: inherit;
  font: inherit;
}

a {
  color: inherit;
  text-decoration: none;
}

svg {
  display: block;
  flex: none;
}

.defs {
  position: absolute;
}

.app {
  position: relative;
  flex: 1;
  display: flex;
  flex-direction: column;
}

/* title bar */
.titlebar {
  display: flex;
  align-items: center;
  height: 46px;
  padding: 0 1px 2px 5px;
  background: #303030;
  color: #fff;
}

.titlebar h1 {
  flex: 1;
}

.titlebar button {
  width: 37px;
  height: 36px;
  display: grid;
  place-items: center;
}

.logo {
  width: 28px;
  height: 28px;
  margin-right: 4px;
}

/* menu */
.menubar {
  display: flex;
  align-items: center;
  gap: 23px;
  height: 41px;
  padding: 1px 8px 0 12px;
  background: #e0e0e0;
  border-bottom: 1px solid #bcbcbc;
}

.brand {
  display: flex;
  margin-left: auto;
  color: #fff;
  font: italic 700 24px/30px "DejaVu Sans", sans-serif;
}

.brand span {
  width: 71px;
  height: 30px;
  background: #000;
  text-align: center;
}

.brand span:first-child {
  background: #ea0000;
}

/* toolbar */
.toolbar {
  display: flex;
  height: 104px;
  border-bottom: 1px solid #bcbcbc;
}

.tools {
  display: flex;
  gap: 9px;
  margin-bottom: 2px;
  padding: 14px 10px 0 7px;
  border-right: 1px solid #bcbcbc;
}

.tools button {
  display: flex;
  flex-direction: column;
  align-items: center;
  gap: 13px;
  height: 76px;
  white-space: nowrap;
}

.tools button:disabled {
  color: #8c8c8c;
}

.tools.grow {
  flex: 1;
  padding-left: 15px;
}

.tools.right {
  padding: 14px 10px 0 13px;
}

.tools:last-child {
  padding-right: 8px;
  border-right: 0;
}

/* body */
.content {
  flex: 1;
  display: flex;
  border-bottom: 1px solid #bcbcbc;
}

.sidebar {
  flex: none;
  width: 404px;
  padding-top: 8px;
  border-right: 1px solid #bcbcbc;
}

.sidebar h2,
.sidebar a {
  display: flex;
  align-items: center;
  height: 34px;
}

.sidebar h2 {
  justify-content: space-between;
  padding: 0 6px 0 11px;
}

.sidebar h2 svg {
  width: 18px;
  height: 18px;
}

.sidebar a {
  gap: 11px;
  padding-left: 14px;
}

.sidebar a svg {
  width: 21px;
  height: 21px;
  fill: none;
  stroke: #555;
  stroke-width: 1.4;
}

.sidebar .pending {
  margin-top: 7px;
}

main {
  flex: 1;
  min-width: 0;
}

/* partition list */
.list {
  display: flex;
  padding-bottom: 20px;
  border-bottom: 1px solid #bcbcbc;
}

table {
  flex: 1;
  width: 0;
  table-layout: fixed;
  border-collapse: separate;
  border-spacing: 0;
  white-space: nowrap;
}

.c-mark { width: 31px; }
.c-name { width: 285px; }
.c-size { width: 117px; }
.c-free { width: 115px; }
.c-fs { width: 224px; }
.c-type { width: 339px; }

th, td {
  height: 37px;
  padding: 2px 3px 0;
  text-align: left;
}

th {
  padding-left: 2px;
  font-weight: 400;
  border-right: 1px solid #bcbcbc;
  border-bottom: 1px solid #bcbcbc;
}

th.num,
th.fs {
  padding-right: 20px;
  text-align: right;
}

th.fs {
  text-align: center;
}

td:nth-child(2) {
  padding-left: 13px;
}

td:nth-child(3),
td:nth-child(4),
td:nth-child(5) {
  text-align: right;
}

td:nth-child(6) {
  text-align: center;
}

td:nth-child(7) {
  padding-left: 2px;
}

.disk td:nth-child(n) {
  height: 50px;
  padding: 0;
}

.disk div {
  display: flex;
  align-items: center;
  height: 50px;
  padding-top: 2px;
  background: linear-gradient(to right, #000040, #00004000) 0 48px / 100% 1px no-repeat;
}

.disk svg {
  width: 30px;
  height: 12px;
  margin: 5px 9px 0 2px;
}

.disk b {
  margin-right: 5px;
}

.selected td {
  background: #808080;
  color: #000;
}

.selected td:first-child {
  background: none;
}

.selected td:nth-child(2) {
  background: linear-gradient(to right, transparent 10px, #808080 10px);
}

.sw {
  display: inline-block;
  width: 11px;
  height: 11px;
  margin-right: 4px;
  border: 1px solid #000;
}

td .sw {
  margin: 0 9px 1px 0;
}

.primary { background: #3e97d3; }
.logical { background: #1fc4ea; }
.simple { background: #99cc85; }
.spanned { background: #cba55c; }
.striped { background: #c58ad8; }
.mirrored { background: #c6c600; }
.raid { background: #f8605c; }
.free { background: #a9a9a9; }

.scrollbar {
  display: flex;
  flex-direction: column;
  align-items: center;
  gap: 5px;
  width: 18px;
  margin-bottom: -14px;
  padding: 5px 2px 0 0;
}

.track {
  flex: 1;
  display: flex;
  width: 16px;
  padding-top: 40px;
  background: #e6e6e6;
}

.thumb {
  flex: 1;
  background: #cfcfcf;
}

/* disk maps */
.maps {
  display: flex;
  flex-direction: column;
  gap: 12px;
  padding: 7px 3px 0 2px;
}

.map {
  display: flex;
  align-items: center;
  height: 83px;
  padding: 5px 3px 4px 3px;
  border: 1px solid #9aa9c4;
  border-radius: 4px;
}

.map > svg {
  width: 40px;
  height: 16px;
  margin-top: 8px;
}

.info {
  width: 137px;
  padding-left: 7px;
  white-space: nowrap;
}

.parts {
  flex: 1;
  display: grid;
  grid-template-columns: 78fr 78fr 460fr 78fr 926fr 336fr;
  gap: 2px;
}

.parts.two {
  grid-template-columns: 1054fr 910fr;
}

.part {
  min-width: 0;
  height: 72px;
  padding: 8px 0 0 4px;
  border: 1px solid #9aa9c4;
  border-radius: 4px;
  white-space: nowrap;
}

.part.active {
  border-color: #c88a00;
  background: #ebd06e;
}

.bar {
  height: 14px;
  margin: 0 7px 5px 3px;
  background: #3e97d3;
}

.bar div {
  height: 100%;
  background: #347dae;
}

.bar.none {
  background: #a9a9a9;
}

/* legend */
.legend {
  display: flex;
  gap: 19px;
  height: 53px;
  padding: 4px 6px 0 20px;
  color: #111;
}

.legend > span {
  white-space: nowrap;
}

.social {
  display: flex;
  gap: 5px;
  margin: -2px 0 0 auto;
}

/* message box */
.overlay {
  position: absolute;
  inset: 0;
  display: grid;
  place-items: center;
}

dialog {
  position: static;
  margin: 0;
  width: 502px;
  height: 156px;
  padding: 0;
  border: 1px solid #000;
  background: #f8f8f8;
  color: inherit;
  box-shadow: 0 0 5px 2px #5a5a90;
}

.dialog-head {
  display: flex;
  align-items: center;
  height: 46px;
  padding: 0 12px 2px 5px;
  background: #303030;
  color: #fff;
}

.dialog-head h2 {
  flex: 1;
}

.dialog-body {
  display: flex;
  gap: 26px;
  height: 67px;
  padding: 12px 30px 0 15px;
}

.ok {
  display: block;
  width: 94px;
  height: 30px;
  margin: 0 auto;
  border: 1px solid #707070;
  border-radius: 2px;
  background: #e0e0e0;
}

/* taskbar */
.taskbar {
  display: flex;
  height: 50px;
  background: #272727;
  color: #fff;
}

.taskbar > button {
  width: 62px;
  display: grid;
  place-items: center;
}

.system {
  display: flex;
  padding-right: 3px;
}

.system button {
  width: 60px;
  display: grid;
  place-items: center;
}

.running {
  background: #515151;
  border-bottom: 3px solid #76b9ed;
}

.tray {
  display: flex;
  align-items: center;
  gap: 10px;
  margin-left: auto;
  padding-right: 25px;
  margin-right: 5px;
  border-right: 1px solid #777;
}

.pointer {
  margin-right: 3px;
}

.dex {
  fill: #fff;
  font: 700 8px "Open Sans", sans-serif;
}

time {
  width: 76px;
  font-size: 14px;
  line-height: 23px;
  text-align: center;
}

.notes {
  margin-left: 10px;
}
```
